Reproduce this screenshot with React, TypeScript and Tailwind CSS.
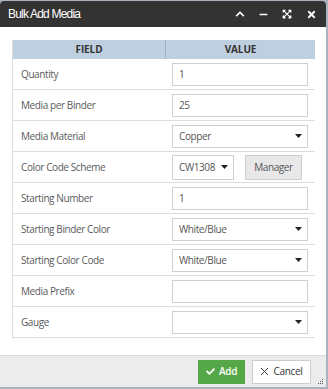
import React from "react";
import { FaChevronUp, FaMinus, FaExpandArrowsAlt, FaTimes, FaCheck } from "react-icons/fa";

const Caret = () => (
  <svg width="7" height="4" viewBox="0 0 7 4" className="shrink-0">
    <path d="M0 0 H7 L3.5 4 Z" fill="#222" />
  </svg>
);

const TextInput = ({ value = "" }: { value?: string }) => (
  <div className="flex h-[23px] w-full items-center border border-[#cfcfcf] bg-white px-[6px] text-[#555]">
    {value}
  </div>
);

const SelectInput = ({ value = "" }: { value?: string }) => (
  <div className="flex h-[23px] w-full items-center justify-between border border-[#cfcfcf] bg-white pl-[6px] pr-[5px] text-[#555]">
    <span>{value}</span>
    <Caret />
  </div>
);

type Row = { label: string; field: React.ReactNode };

const rows: Row[] = [
  { label: "Quantity", field: <TextInput value="1" /> },
  { label: "Media per Binder", field: <TextInput value="25" /> },
  { label: "Media Material", field: <SelectInput value="Copper" /> },
  {
    label: "Color Code Scheme",
    field: (
      <div className="flex items-center gap-[11px]">
        <div className="flex h-[25px] w-[62px] items-center justify-between border border-[#cfcfcf] bg-white pl-[6px] pr-[5px] text-[#555]">
          <span>CW1308</span>
          <Caret />
        </div>
        <div className="flex h-[25px] w-[57px] items-center justify-center border border-[#cccccc] bg-[#e8e8e8] text-[#555]">
          Manager
        </div>
      </div>
    ),
  },
  { label: "Starting Number", field: <TextInput value="1" /> },
  { label: "Starting Binder Color", field: <SelectInput value="White/Blue" /> },
  { label: "Starting Color Code", field: <SelectInput value="White/Blue" /> },
  { label: "Media Prefix", field: <TextInput /> },
  { label: "Gauge", field: <SelectInput /> },
];

export default function App() {
  return (
    <div className="flex h-[389px] w-[328px] flex-col bg-[#aab4be] pt-[1px]" style={{ fontFamily: "'Open Sans', sans-serif" }}>
      <div className="flex h-[386px] w-[326px] flex-col overflow-hidden rounded-t-[4px] bg-white">
        {/* Title bar */}
        <div className="flex h-[26px] shrink-0 items-center justify-between bg-[#333333] pl-[8px] pr-[9px]">
          <span
            className="text-[12px] tracking-[-0.8px] text-white"
            style={{ fontFamily: "'Liberation Sans', Arial, sans-serif" }}
          >
            Bulk Add Media
          </span>
          <div className="flex items-center gap-[14px] text-white">
            <FaChevronUp size={10} />
            <FaMinus size={9} />
            <FaExpandArrowsAlt size={10} />
            <FaTimes size={11} />
          </div>
        </div>

        {/* Body */}
        <div className="flex-1 pl-[12px] pr-[11px] pt-[13px] text-[10px] tracking-[-0.4px]">
          <div className="border-l border-[#dddddd]">
            <div className="flex h-[19px] bg-[#c0cfdf] font-bold tracking-[-0.1px] text-[#333]">
              <div className="flex w-[152px] items-center justify-center">FIELD</div>
              <div className="flex flex-1 items-center justify-center border-l border-[#9fb4ca]">VALUE</div>
            </div>
            {rows.map((r) => (
              <div key={r.label} className="flex h-[31px] items-center border-b border-[#dddddd]">
                <div className="w-[152px] pl-[8px] text-[#5a5a5a]">{r.label}</div>
                <div className="flex-1 px-[7px]">{r.field}</div>
              </div>
            ))}
          </div>
        </div>

        {/* Footer */}
        <div className="relative flex h-[32px] shrink-0 items-center justify-end gap-[7px] border-t border-[#dcdcdc] bg-[#ececec] pr-[15px] text-[10px] tracking-[-0.3px]">
          <div className="flex h-[24px] w-[47px] items-center justify-center gap-[4px] bg-[#55a747] font-semibold text-white">
            <FaCheck size={9} />
            <span>Add</span>
          </div>
          <div className="flex h-[24px] w-[59px] items-center justify-center gap-[4px] border border-[#cccccc] bg-white text-[#333]">
            <svg width="9" height="9" viewBox="0 0 9 9">
              <path d="M1 1 L8 8 M8 1 L1 8" stroke="#444" strokeWidth="1" />
            </svg>
            <span>Cancel</span>
          </div>
          <svg width="6" height="6" viewBox="0 0 6 6" className="absolute bottom-[2px] right-[2px]">
            <rect x="4" y="0" width="1" height="1" fill="#555" />
            <rect x="4" y="2" width="1" height="1" fill="#555" />
            <rect x="2" y="2" width="1" height="1" fill="#555" />
            <rect x="0" y="4" width="1" height="1" fill="#555" />
            <rect x="2" y="4" width="1" height="1" fill="#555" />
            <rect x="4" y="4" width="1" height="1" fill="#555" />
          </svg>
        </div>
      </div>
    </div>
  );
}
